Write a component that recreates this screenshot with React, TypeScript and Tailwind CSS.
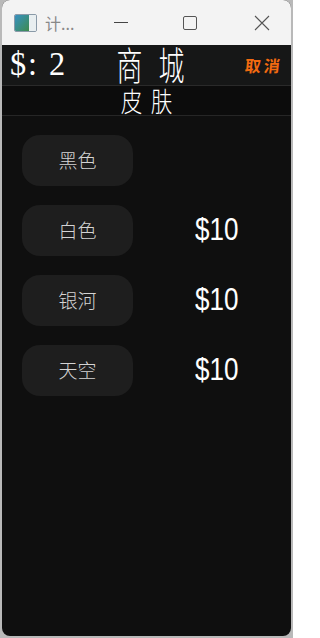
import React from 'react';

const items = [
  { name: '黑色', price: '' },
  { name: '白色', price: '$10' },
  { name: '银河', price: '$10' },
  { name: '天空', price: '$10' },
];

const cjk = { fontFamily: '"Noto Sans CJK SC", sans-serif' };

function TitleBar() {
  return (
    <div className="flex h-[45px] items-center bg-[#f3f3f3] text-[#666]">
      <div className="ml-[12px] flex h-[18px] w-[23px] items-stretch overflow-hidden rounded-[2px] border border-[#8a9aa8]">
        <div className="w-[14px] bg-gradient-to-br from-[#3a8fc0] to-[#3f8a4a]" />
        <div className="flex-1 bg-[#e8eef0]" />
      </div>
      <span className="ml-[8px] text-[16px] text-[#888]" style={cjk}>
        计...
      </span>
      <div className="ml-[40px] h-px w-[14px] bg-[#444]" />
      <div className="ml-[55px] h-[14px] w-[14px] rounded-[2px] border border-[#555]" />
      <svg className="ml-[57px]" width="16" height="16" viewBox="0 0 16 16">
        <path d="M1 1 L15 15 M15 1 L1 15" stroke="#555" strokeWidth="1.1" />
      </svg>
    </div>
  );
}

export default function App() {
  return (
    <div className="h-[638px] w-[293px] bg-[#b9b9b9] pb-[2px]">
      <div className="mx-[2px] flex h-full flex-col overflow-hidden rounded-[8px] bg-[#0f0f0f]">
        <TitleBar />
        <div className="flex h-[41px] items-start border-b border-[#2a2a2a] bg-[#161717]">
          <span
            className="ml-[8px] w-[100px] origin-left scale-x-[0.95] text-[34px] leading-[38px] tracking-[2px] text-white"
            style={{ fontFamily: '"Liberation Serif", "DejaVu Serif", serif' }}
          >
            $: 2
          </span>
          <div className="flex w-[80px] justify-center gap-[5px] text-[37px] font-light leading-[37px] text-white" style={cjk}>
            <span className="w-[37px] origin-top scale-x-[0.7] scale-y-[1.03]">商</span>
            <span className="w-[37px] origin-top scale-x-[0.7] scale-y-[1.03]">城</span>
          </div>
          <span
            className="ml-auto mr-[8px] mt-[11px] -skew-x-6 text-[16px] font-bold leading-[18px] tracking-[3px] text-[#f26a10]"
            style={cjk}
          >
            取消
          </span>
        </div>
        <div
          className="flex h-[30px] items-center justify-center gap-[2px] border-b border-[#262626] bg-[#0c0c0c] text-[27px] font-light leading-[29px] text-white"
          style={cjk}
        >
          <span className="w-[28px] scale-x-[0.8]">皮</span>
          <span className="w-[28px] scale-x-[0.8]">肤</span>
        </div>
        <div className="flex flex-col gap-[19px] pl-[20px] pt-[19px]">
          {items.map((it) => (
            <div key={it.name} className="flex items-center">
              <div
                className="flex h-[51px] w-[111px] items-center justify-center rounded-[18px] bg-[#1e1e1e] text-[19px] font-light text-[#d4d4d4]"
                style={cjk}
              >
                {it.name}
              </div>
              <span
                className="ml-[62px] origin-left scale-x-[0.84] text-[31px] text-white"
                style={{ fontFamily: '"Liberation Sans", Arial, sans-serif' }}
              >
                {it.price}
              </span>
            </div>
          ))}
        </div>
      </div>
    </div>
  );
}
